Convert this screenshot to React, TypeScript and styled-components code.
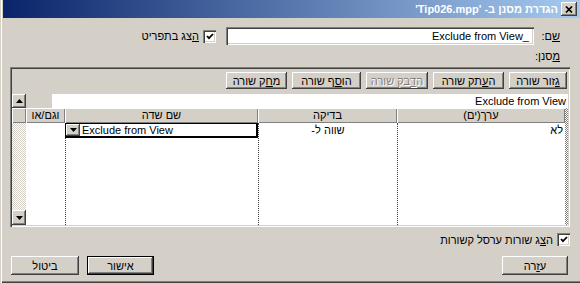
import React from 'react'
import styled, { createGlobalStyle, css } from 'styled-components'

const GlobalStyle = createGlobalStyle`
  html, body {
    margin: 0;
    padding: 0;
    background: #d4d0c8;
  }
  body {
    font-family: "Liberation Sans", "DejaVu Sans", Arial, sans-serif;
    font-size: 11px;
    color: #000;
  }
`

const raised = css`
  box-shadow: inset -1px -1px 0 #404040, inset 1px 1px 0 #fff,
    inset -2px -2px 0 #808080, inset 2px 2px 0 #d4d0c8;
`

const sunken = css`
  box-shadow: inset 1px 1px 0 #808080, inset 2px 2px 0 #404040,
    inset -1px -1px 0 #fff, inset -2px -2px 0 #d4d0c8;
`

const hatch = (a: string, b: string) => css`
  background-color: ${a};
  background-image: repeating-conic-gradient(${a} 0 25%, ${b} 0 50%);
  background-size: 2px 2px;
`

const Window = styled.div`
  width: 580px;
  height: 283px;
  box-sizing: border-box;
  padding: 0 0 2px 3px;
  background: #d4d0c8;
  box-shadow: inset 1px 0 0 #d4d0c8, inset 2px 0 0 #fff,
    inset 0 -1px 0 #404040, inset 0 -2px 0 #808080;
  direction: rtl;
  display: flex;
  flex-direction: column;
  overflow: hidden;
`

const TitleBar = styled.div`
  height: 18px;
  flex: none;
  display: flex;
  align-items: center;
  gap: 3px;
  padding-right: 3px;
  background: linear-gradient(to right, #0a246a, #a6caf0);
`

const CloseButton = styled.div`
  width: 16px;
  height: 14px;
  flex: none;
  background: #d4d0c8;
  ${raised};
  display: flex;
  align-items: center;
  justify-content: center;
`

const Title = styled.div`
  color: #fff;
  font-weight: bold;
  white-space: nowrap;
`

const Content = styled.div`
  flex: 1;
  display: flex;
  flex-direction: column;
  padding: 9px 10px 0 7px;
`

const NameRow = styled.div`
  display: flex;
  align-items: center;
  height: 18px;
`

const FieldLabel = styled.div`
  width: 26px;
  padding-right: 10px;
  flex: none;
  white-space: nowrap;
`

const TextInput = styled.div`
  width: 308px;
  height: 18px;
  box-sizing: border-box;
  background: #fff;
  ${sunken};
  padding: 0 5px;
  display: flex;
  align-items: center;
  white-space: nowrap;
`

const LtrText = styled.span`
  direction: ltr;
  unicode-bidi: isolate;
`

const CheckLabel = styled.label<{ $offset?: number }>`
  display: flex;
  align-items: center;
  gap: 4px;
  margin-right: ${({ $offset }) => $offset ?? 0}px;
  white-space: nowrap;
`

const CheckBox = styled.span`
  width: 13px;
  height: 13px;
  box-sizing: border-box;
  background: #fff;
  ${sunken};
  display: flex;
  align-items: center;
  justify-content: center;
  flex: none;
`

const FilterLabel = styled.div`
  height: 13px;
  margin-top: 5px;
  padding-right: 10px;
  line-height: 13px;
`

const GridBox = styled.div`
  margin-top: 4px;
  height: 160px;
  box-sizing: border-box;
  padding: 2px;
  ${sunken};
  display: flex;
  flex-direction: column;
`

const Toolbar = styled.div`
  height: 25px;
  flex: none;
  box-sizing: border-box;
  display: flex;
  align-items: flex-start;
  gap: 5px;
  padding: 3px 1px 0;
`

const Button = styled.div<{ $width: number; $disabled?: boolean; $default?: boolean; $height?: number }>`
  width: ${({ $width }) => $width}px;
  height: ${({ $height }) => $height ?? 17}px;
  box-sizing: border-box;
  background: #d4d0c8;
  ${raised};
  display: flex;
  align-items: center;
  justify-content: center;
  white-space: nowrap;
  flex: none;
  ${({ $disabled }) =>
    $disabled &&
    css`
      color: #808080;
      text-shadow: 1px 1px 0 #fff;
    `}
  ${({ $default }) =>
    $default &&
    css`
      border: 1px solid #000;
      box-shadow: inset -1px -1px 0 #404040, inset 1px 1px 0 #fff,
        inset -2px -2px 0 #808080;
    `}
`

const GridArea = styled.div`
  flex: 1;
  display: flex;
  min-height: 0;
`

const MainCol = styled.div`
  flex: 1;
  display: flex;
  flex-direction: column;
`

const EditRow = styled.div`
  height: 14px;
  flex: none;
  display: flex;
`

const EditField = styled.div`
  flex: 1;
  background: #fff;
  margin-left: 2px;
  padding-right: 2px;
  line-height: 14px;
  white-space: nowrap;
`

const EditGap = styled.div`
  width: 24px;
  flex: none;
`

const TableWrap = styled.div`
  flex: 1;
  display: flex;
`

const SideStrip = styled.div`
  width: 3px;
  flex: none;
  ${hatch('#808080', '#fff')};
`

const Table = styled.div`
  flex: 1;
  display: flex;
  flex-direction: column;
  background: #fff;
`

const columns = '168px 139px 193px 1fr'

const HeaderRow = styled.div`
  height: 15px;
  flex: none;
  display: grid;
  grid-template-columns: ${columns};
`

const HeaderCell = styled.div`
  background: #d4d0c8;
  box-shadow: inset 1px 1px 0 #fff, inset -1px -1px 0 #808080;
  text-align: center;
  line-height: 15px;
  white-space: nowrap;
`

const Body = styled.div`
  flex: 1;
  display: grid;
  grid-template-columns: ${columns};
`

const BodyColumn = styled.div<{ $divider?: boolean }>`
  box-sizing: border-box;
  border-left: ${({ $divider }) => ($divider ? '1px dotted #404040' : 'none')};
`

const Cell = styled.div<{ $align: 'right' | 'center' }>`
  height: 14px;
  line-height: 14px;
  padding: 0 2px;
  text-align: ${({ $align }) => $align};
  white-space: nowrap;
`

const SelectedCell = styled.div`
  height: 15px;
  box-sizing: border-box;
  margin-left: -1px;
  border: solid #000;
  border-width: 1px 2px 2px 1px;
  display: flex;
  align-items: center;
  gap: 2px;
  direction: ltr;
  background: #fff;
  white-space: nowrap;
`

const DropButton = styled.div`
  width: 14px;
  height: 12px;
  flex: none;
  background: #d4d0c8;
  ${raised};
  display: flex;
  align-items: center;
  justify-content: center;
`

const ScrollCol = styled.div`
  width: 14px;
  flex: none;
  display: flex;
  flex-direction: column;
`

const ArrowButton = styled.div<{ $height: number }>`
  height: ${({ $height }) => $height}px;
  flex: none;
  background: #d4d0c8;
  ${raised};
  display: flex;
  align-items: center;
  justify-content: center;
`

const Corner = styled.div`
  height: 15px;
  flex: none;
  background: #d4d0c8;
  box-shadow: inset 1px 1px 0 #fff, inset -1px -1px 0 #808080;
`

const Track = styled.div`
  flex: 1;
  ${hatch('#d4d0c8', '#fff')};
`

const LinkRow = styled.div`
  margin-top: 6px;
  height: 13px;
  display: flex;
`

const Footer = styled.div`
  margin-top: 10px;
  display: flex;
  justify-content: space-between;
  padding: 0 2px 0 1px;
`

const ButtonGroup = styled.div`
  display: flex;
  gap: 8px;
`

const Arrow = ({ up }: { up?: boolean }) => (
  <svg width="7" height="4" viewBox="0 0 7 4">
    <polygon points={up ? '3.5,0 7,4 0,4' : '0,0 7,0 3.5,4'} fill="#000" />
  </svg>
)

const Check = () => (
  <svg width="8" height="7" viewBox="0 0 8 7">
    <polyline points="1,3 3,5.2 7,1" fill="none" stroke="#000" strokeWidth="1.8" />
  </svg>
)

const CloseIcon = () => (
  <svg width="8" height="7" viewBox="0 0 8 7">
    <path d="M1 0.5 L7 6.5 M7 0.5 L1 6.5" stroke="#000" strokeWidth="1.7" />
  </svg>
)

const toolbarButtons = [
  { key: 'cut', label: <><u>ג</u>זור שורה</>, width: 58 },
  { key: 'copy', label: <>ה<u>ע</u>תק שורה</>, width: 71 },
  { key: 'paste', label: <>ה<u>ד</u>בק שורה</>, width: 62, disabled: true },
  { key: 'insert', label: <>הו<u>ס</u>ף שורה</>, width: 69 },
  { key: 'delete', label: <>מ<u>ח</u>ק שורה</>, width: 61 },
]

const App: React.FC = () => {
  return (
    <>
      <GlobalStyle />
      <Window>
        <TitleBar>
          <CloseButton>
            <CloseIcon />
          </CloseButton>
          <Title>הגדרת מסנן ב- 'Tip026.mpp'</Title>
        </TitleBar>
        <Content>
          <NameRow>
            <FieldLabel>
              <u>ש</u>ם:
            </FieldLabel>
            <TextInput>
              <LtrText>Exclude from View_</LtrText>
            </TextInput>
            <CheckLabel $offset={10}>
              <CheckBox>
                <Check />
              </CheckBox>
              <span>
                <u>ה</u>צג בתפריט
              </span>
            </CheckLabel>
          </NameRow>
          <FilterLabel>
            <u>מ</u>סנן:
          </FilterLabel>
          <GridBox>
            <Toolbar>
              {toolbarButtons.map((b) => (
                <Button key={b.key} $width={b.width} $disabled={b.disabled}>
                  {b.label}
                </Button>
              ))}
            </Toolbar>
            <GridArea>
              <MainCol>
                <EditRow>
                  <EditField>Exclude from View</EditField>
                  <EditGap />
                </EditRow>
                <TableWrap>
                  <SideStrip />
                  <Table>
                    <HeaderRow>
                      <HeaderCell>ערך(ים)</HeaderCell>
                      <HeaderCell>בדיקה</HeaderCell>
                      <HeaderCell>שם שדה</HeaderCell>
                      <HeaderCell>וגם/או</HeaderCell>
                    </HeaderRow>
                    <Body>
                      <BodyColumn $divider>
                        <Cell $align="right">לא</Cell>
                      </BodyColumn>
                      <BodyColumn $divider>
                        <Cell $align="center">שווה ל-</Cell>
                      </BodyColumn>
                      <BodyColumn $divider>
                        <SelectedCell>
                          <DropButton>
                            <Arrow />
                          </DropButton>
                          <span>Exclude from View</span>
                        </SelectedCell>
                      </BodyColumn>
                      <BodyColumn />
                    </Body>
                  </Table>
                </TableWrap>
              </MainCol>
              <ScrollCol>
                <ArrowButton $height={14}>
                  <Arrow up />
                </ArrowButton>
                <Corner />
                <Track />
                <ArrowButton $height={15}>
                  <Arrow />
                </ArrowButton>
              </ScrollCol>
            </GridArea>
          </GridBox>
          <LinkRow>
            <CheckLabel>
              <CheckBox>
                <Check />
              </CheckBox>
              <span>
                ה<u>צ</u>ג שורות ערסל קשורות
              </span>
            </CheckLabel>
          </LinkRow>
          <Footer>
            <Button $width={66} $height={19}>
              ע<u>ז</u>רה
            </Button>
            <ButtonGroup>
              <Button $width={67} $height={19} $default>
                אישור
              </Button>
              <Button $width={68} $height={19}>
                ביטול
              </Button>
            </ButtonGroup>
          </Footer>
        </Content>
      </Window>
    </>
  )
}

export default App
